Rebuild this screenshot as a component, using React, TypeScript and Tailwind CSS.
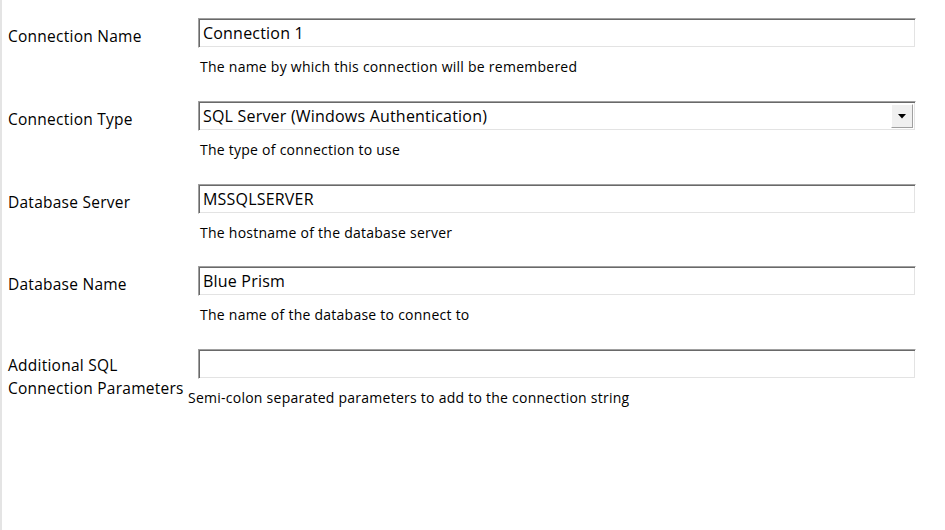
import React from "react";

const font = { fontFamily: '"Open Sans", "Noto Sans", "Liberation Sans", sans-serif' };

function Sunken({ children }: { children?: React.ReactNode }) {
  return (
    <div className="relative flex h-[30px] items-center border border-t-[#a0a0a0] border-l-[#a0a0a0] border-r-white border-b-white bg-white shadow-[inset_1px_1px_0_#696969,inset_-1px_-1px_0_#e3e3e3] pl-[4px] text-[16px] font-medium text-black">
      {children}
    </div>
  );
}

function Row({
  label,
  value,
  desc,
  combo,
  h,
  labelPad,
  descShift,
}: {
  label: React.ReactNode;
  value: string;
  desc: string;
  combo?: boolean;
  h: string;
  labelPad: string;
  descShift?: boolean;
}) {
  return (
    <div className={`flex ${h}`}>
      <div className={`w-[196px] shrink-0 pl-[6px] text-[15.5px] leading-[23px] tracking-[0.25px] text-black ${labelPad}`}>{label}</div>
      <div className="flex-1 pr-[29px]">
        <Sunken>
          <span className="tracking-[0.2px]">{value}</span>
          {combo && (
            <div className="absolute right-[2px] top-[2px] bottom-[2px] flex w-[22px] items-center justify-center border border-t-white border-l-white border-r-[#a0a0a0] border-b-[#a0a0a0] bg-[#f0f0f0]">
              <svg width="8" height="5" viewBox="0 0 8 5">
                <polygon points="0,0 8,0 4,4.5" fill="#000" />
              </svg>
            </div>
          )}
        </Sunken>
        <div className={`mt-[9px] text-[14px] leading-[19px] tracking-[0.25px] text-black ${descShift ? "-ml-[10px]" : "pl-[2px]"}`}>{desc}</div>
      </div>
    </div>
  );
}

export default function App() {
  return (
    <div className="h-[530px] w-[945px] border-l-2 border-[#e4e4e4] bg-white pt-[18px]" style={font}>
      <Row h="h-[83px]" labelPad="pt-[7px]" label="Connection Name" value="Connection 1" desc="The name by which this connection will be remembered" />
      <Row h="h-[83px]" labelPad="pt-[7px]" label="Connection Type" value="SQL Server (Windows Authentication)" desc="The type of connection to use" combo />
      <Row h="h-[82px]" labelPad="pt-[7px]" label="Database Server" value="MSSQLSERVER" desc="The hostname of the database server" />
      <Row h="h-[83px]" labelPad="pt-[7px]" label="Database Name" value="Blue Prism" desc="The name of the database to connect to" />
      <Row
        h="h-[83px]"
        labelPad="pt-[5px]"
        label={
          <>
            Additional SQL
            <br />
            Connection Parameters
          </>
        }
        value=""
        desc="Semi-colon separated parameters to add to the connection string"
        descShift
      />
    </div>
  );
}
